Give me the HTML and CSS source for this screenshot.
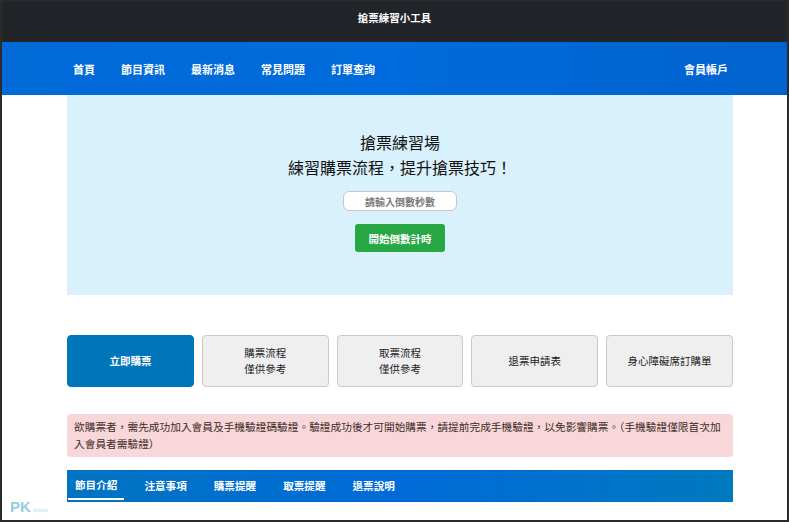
FILE: index.html
```html
<!DOCTYPE html>
<html lang="zh-Hant">
<head>
<meta charset="utf-8">
<title>搶票練習小工具</title>
<link rel="stylesheet" href="styles.css">
</head>
<body>
<header class="topbar">搶票練習小工具</header>
<nav class="mainnav">
  <div class="nav-inner">
    <ul class="nav-links">
      <li>首頁</li>
      <li>節目資訊</li>
      <li>最新消息</li>
      <li>常見問題</li>
      <li>訂單查詢</li>
    </ul>
    <div class="nav-account">會員帳戶</div>
  </div>
</nav>
<main class="container">
  <section class="hero">
    <h1 class="hero-title">搶票練習場<br>練習購票流程，提升搶票技巧！</h1>
    <input class="hero-input" type="text" placeholder="請輸入倒數秒數">
    <button class="hero-btn">開始倒數計時</button>
  </section>
  <section class="actions">
    <div class="action primary">立即購票</div>
    <div class="action">購票流程<br>僅供參考</div>
    <div class="action">取票流程<br>僅供參考</div>
    <div class="action">退票申請表</div>
    <div class="action">身心障礙席訂購單</div>
  </section>
  <div class="alert">欲購票者，需先成功加入會員及手機驗證碼驗證。驗證成功後才可開始購票，請提前完成手機驗證，以免影響購票。（手機驗證僅限首次加入會員者需驗證）</div>
  <ul class="tabs">
    <li class="active">節目介紹</li>
    <li>注意事項</li>
    <li>購票提醒</li>
    <li>取票提醒</li>
    <li>退票說明</li>
  </ul>
  <h2 class="section-title">搶票練習場說明</h2>
</main>
<div class="watermark"><span class="pk">PK</span><span class="wm-small">pkstep</span></div>
</body>
</html>
```
FILE: styles.css
```css
html, body {
  margin: 0;
  padding: 0;
  height: 100%;
}
body {
  box-sizing: border-box;
  border: 2px solid #2b2b2b;
  border-top-width: 1px;
  overflow: hidden;
  font-family: "Noto Sans CJK TC", "Noto Sans", sans-serif;
  color: #212529;
  background: #fff;
  position: relative;
}
.topbar {
  height: 41px;
  background: #212529;
  color: #fff;
  font-size: 10.5px;
  font-weight: bold;
  display: flex;
  justify-content: center;
  align-items: center;
  padding-bottom: 9px;
  box-sizing: border-box;
}
.mainnav {
  height: 53px;
  background: linear-gradient(90deg, #016ad7 0%, #006bdc 50%, #0063cf 100%);
  color: #fff;
}
.nav-inner {
  height: 100%;
  display: flex;
  align-items: center;
  justify-content: space-between;
  margin-left: 71px;
  margin-right: 59px;
  font-size: 11px;
  font-weight: bold;
}
.nav-links {
  list-style: none;
  margin: 0;
  padding: 0;
  display: flex;
  gap: 26px;
}
.container {
  width: 666px;
  margin-left: 65px;
}
.hero {
  background: #d9f1fd;
  height: 200px;
  box-sizing: border-box;
  padding-top: 35px;
  display: flex;
  flex-direction: column;
  align-items: center;
}
.hero-title {
  margin: 0;
  font-size: 16px;
  font-weight: normal;
  line-height: 25px;
  text-align: center;
  color: #111;
}
.hero-input {
  margin-top: 11px;
  width: 114px;
  height: 20px;
  box-sizing: border-box;
  border: 1px solid #c6c6c6;
  border-radius: 6px;
  background: #fff;
  font-family: inherit;
  font-size: 10px;
  font-weight: bold;
  text-align: center;
  padding: 0;
}
.hero-input::placeholder {
  color: #7a7a7a;
}
.hero-btn {
  margin-top: 13px;
  width: 90px;
  height: 28px;
  border: none;
  border-radius: 3px;
  background: #28a745;
  color: #fff;
  font-family: inherit;
  font-size: 10.5px;
  font-weight: bold;
  padding: 0;
}
.actions {
  margin-top: 40px;
  display: grid;
  grid-template-columns: repeat(5, 1fr);
  gap: 8px;
}
.action {
  height: 52px;
  box-sizing: border-box;
  border: 1px solid #c9c9c9;
  border-radius: 4px;
  background: #efefef;
  display: flex;
  align-items: center;
  justify-content: center;
  text-align: center;
  font-size: 10.5px;
  line-height: 16px;
  color: #222;
}
.action.primary {
  background: #0175b9;
  border-color: #0175b9;
  color: #fff;
  font-weight: bold;
}
.alert {
  margin-top: 27px;
  background: #f8d7da;
  border-radius: 4px;
  padding: 4px 5px 5px 7px;
  font-size: 10.7px;
  line-height: 17px;
  color: #3e2c28;
}
.tabs {
  list-style: none;
  margin: 13px 0 0;
  padding: 0 0 0 1px;
  height: 32px;
  display: flex;
  gap: 13px;
  background: linear-gradient(90deg, #0074c0 0%, #006ad9 50%, #0079bf 100%);
  color: #fff;
  font-size: 10.6px;
  font-weight: bold;
}
.tabs li {
  padding: 0 7px;
  display: flex;
  align-items: center;
  height: 30px;
  box-sizing: border-box;
}
.tabs li.active {
  border-bottom: 2px solid #fff;
}
.section-title {
  margin: 15px 0 0;
  text-align: center;
  font-size: 15px;
  font-weight: bold;
  color: #111;
}
.watermark {
  position: absolute;
  left: 8px;
  bottom: 5px;
  display: flex;
  align-items: baseline;
  gap: 2px;
  font-family: "Liberation Sans", sans-serif;
}
.pk {
  font-size: 15px;
  font-weight: bold;
  color: #96cde3;
}
.wm-small {
  font-size: 5px;
  color: #b9dcea;
}
```
